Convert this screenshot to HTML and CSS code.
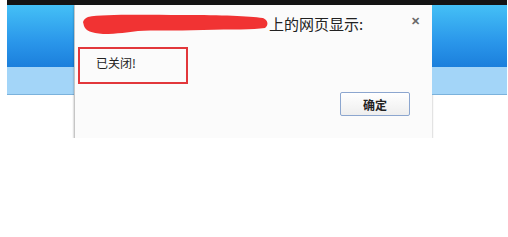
FILE: index.html
```html
<!DOCTYPE html>
<html lang="zh-CN">
<head>
  <meta charset="UTF-8">
  <title>上的网页显示</title>
  <link rel="stylesheet" href="styles.css">
</head>
<body>
  <div class="topbar"></div>
  <div class="stage">
    <div class="side">
      <div class="grad"></div>
      <div class="band"></div>
    </div>

    <div class="dialog">
      <div class="dialog-head">
        <svg class="scribble" width="186" height="22" viewBox="0 0 186 22">
          <path d="M5 4 C20 1 60 2 100 2 C140 2 165 3 180 5 C185 7 186 12 182 15 C170 17 150 16 120 17 C90 18 70 17 55 18 C45 19 35 21 20 21 C8 20 3 18 1 13 L0 9 C1 6 3 5 5 4 Z" fill="#f13333"/>
        </svg>
        <span class="title">上的网页显示:</span>
        <span class="close">&#x2715;</span>
      </div>
      <div class="message">已关闭!</div>
      <div class="actions">
        <button class="ok">确定</button>
      </div>
    </div>

    <div class="side side-right">
      <div class="grad"></div>
      <div class="band"></div>
    </div>
  </div>
</body>
</html>
```

FILE: styles.css
```css
body {
  margin: 0;
  background: #fff;
  font-family: "Noto Sans CJK SC", "Liberation Sans", sans-serif;
  color: #222;
}
.topbar {
  height: 5px;
  margin: 0 1px 0 7px;
  background: #141414;
}
.stage {
  display: flex;
  margin-left: 7px;
}
.side {
  width: 67px;
}
.side-right {
  width: 75px;
}
.side .grad {
  height: 62px;
  background: linear-gradient(#44c0f6, #2a96ea 60%, #1b7fdc);
}
.side .band {
  height: 27px;
  background: #a3d5f8;
  border-bottom: 1px solid #7bb2dc;
}
.dialog {
  width: 357px;
  height: 133px;
  background: #fbfbfb;
  border-left: 1px solid #c6c6c6;
  box-shadow: 0 1px 2px rgba(0, 0, 0, 0.35);
  display: flex;
  flex-direction: column;
}
.dialog-head {
  display: flex;
  align-items: center;
  height: 22px;
  padding: 8px 12px 0 8px;
}
.scribble {
  flex: none;
}
.title {
  font-size: 15px;
  line-height: 22px;
}
.close {
  margin-left: auto;
  font-size: 11px;
  font-weight: bold;
  color: #6a6a6a;
  margin-top: -8px;
}
.message {
  margin: 12px 0 0 3px;
  width: 110px;
  height: 37px;
  box-sizing: border-box;
  border: 2px solid #e2373b;
  padding-left: 16px;
  font-size: 12px;
  line-height: 28px;
}
.actions {
  display: flex;
  justify-content: flex-end;
  padding-right: 22px;
  margin-top: 8px;
}
.ok {
  width: 70px;
  height: 24px;
  padding: 0;
  border: 1px solid #8ca6cf;
  border-radius: 2px;
  background: linear-gradient(#ffffff, #eeeeee);
  font-family: "Noto Sans CJK SC", sans-serif;
  font-size: 12px;
  font-weight: bold;
  color: #222;
}
```
